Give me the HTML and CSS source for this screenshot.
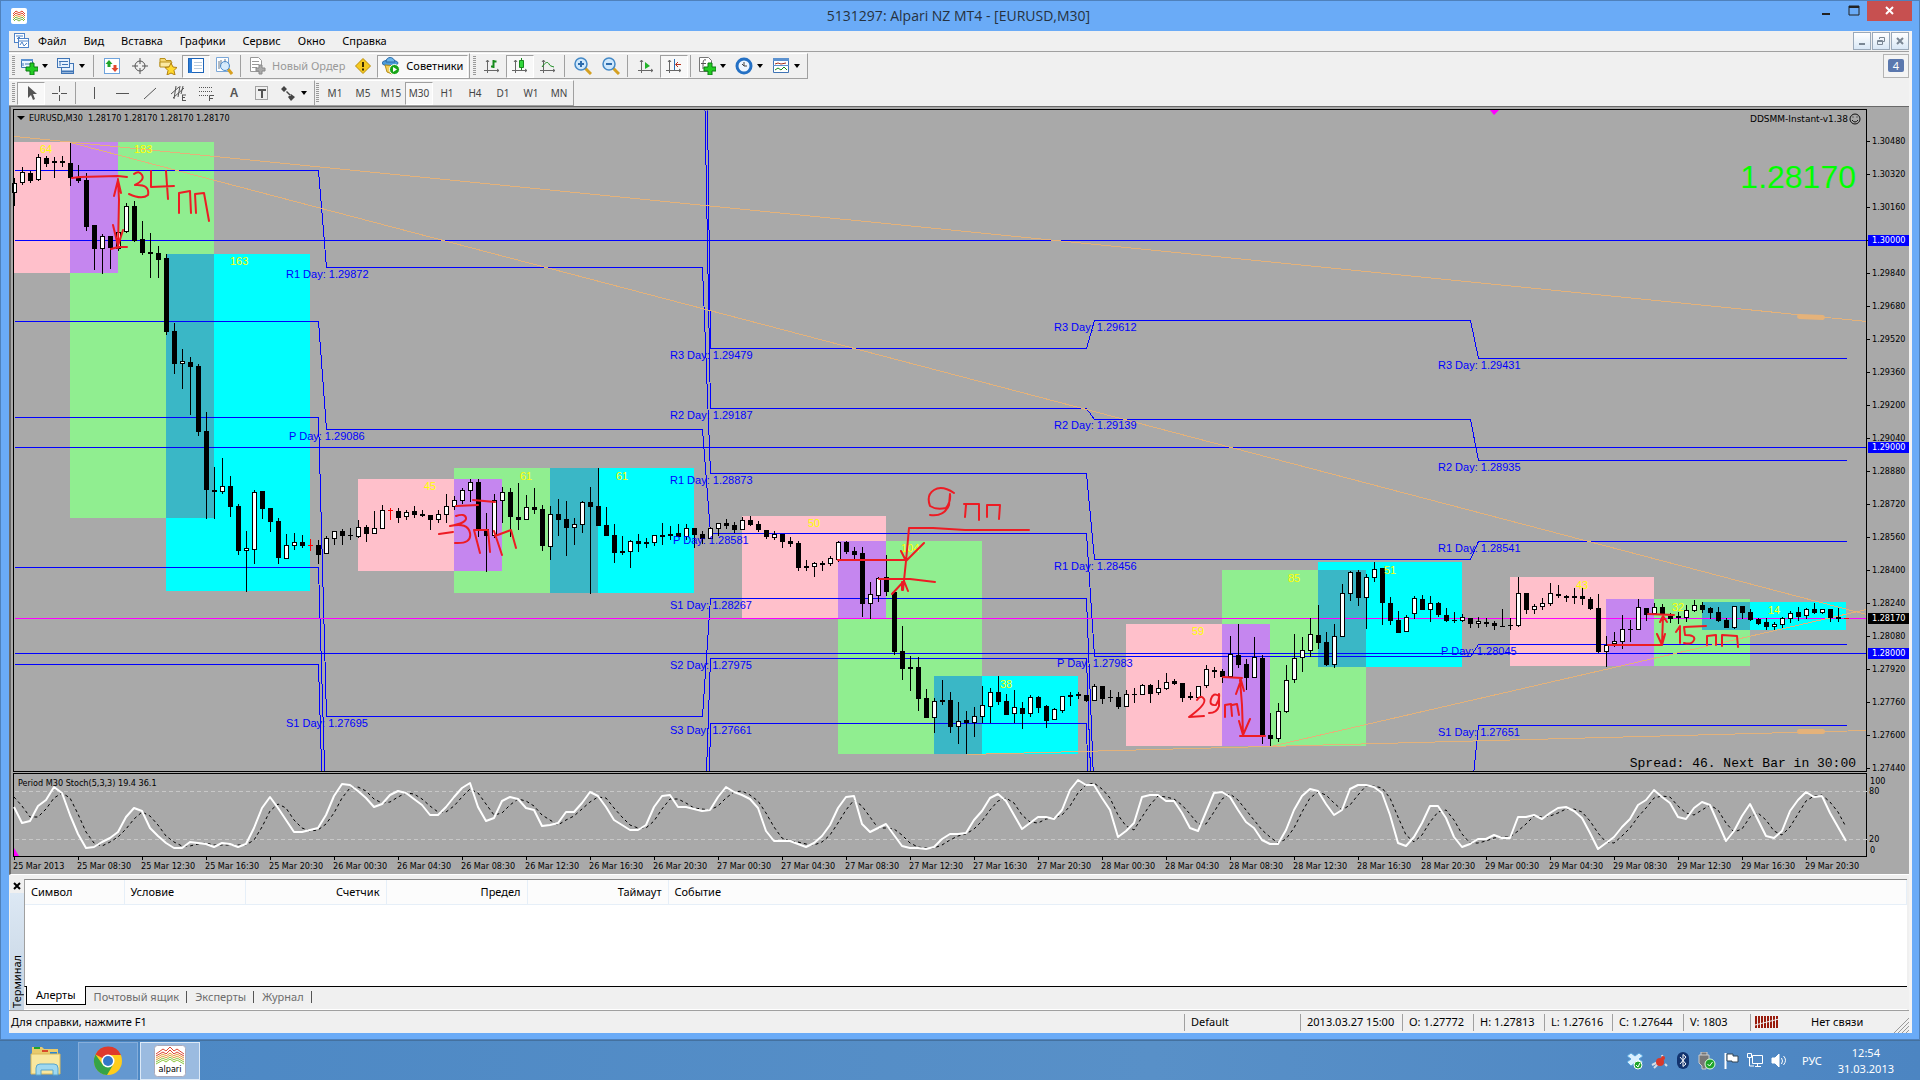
FILE: index.html
```html
<!DOCTYPE html>
<html lang="ru">
<head>
<meta charset="utf-8">
<title>5131297: Alpari NZ MT4 - [EURUSD,M30]</title>
<link rel="stylesheet" href="styles.css">
</head>
<body>
<div class="window">
  <header class="titlebar">
    <svg class="app-icon" width="16" height="16" viewBox="0 0 16 16"><rect width="16" height="16" rx="2" fill="#fff"/><g fill="none" stroke-width="1"><path stroke="#e0452c" d="M2 6l3-3 3 2 3-2 3 3M2 8l3-3 3 2 3-2 3 3"/><path stroke="#e9a13b" d="M2 10l3-3 3 2 3-2 3 3"/><path stroke="#7cb342" d="M2 12l3-3 3 2 3-2 3 3M3 13l2-2 3 2 3-2 2 2"/></g></svg>
    <h1 class="title">5131297: Alpari NZ MT4 - [EURUSD,M30]</h1>
    <div class="caption">
      <button class="cap" aria-label="Свернуть"><svg width="12" height="12"><rect x="1" y="8" width="8" height="2" fill="#222"/></svg></button>
      <button class="cap" aria-label="Развернуть"><svg width="12" height="12"><path d="M1 1h10v9H1z" fill="none" stroke="#222"/><path d="M1 1h10v2H1z" fill="#222"/></svg></button>
      <button class="cap close" aria-label="Закрыть"><svg width="10" height="10"><path d="M1 1l7 7M8 1L1 8" stroke="#fff" stroke-width="2"/></svg></button>
    </div>
  </header>

  <div class="client">
    <nav class="menubar">
      <svg class="menu-icon" width="15" height="16" viewBox="0 0 15 16"><g fill="#fff" stroke="#4f83c8"><rect x=".5" y=".5" width="10" height="9"/><path d="M2 3h7M3 6l2-2 2 2"/><rect x="4.500" y="5.500" width="10" height="9"/><path fill="none" d="M5 8h9M6 12l2-3 2 4 3-3"/></g></svg>
      <button class="menu">Файл</button><button class="menu">Вид</button><button class="menu">Вставка</button><button class="menu">Графики</button><button class="menu">Сервис</button><button class="menu">Окно</button><button class="menu">Справка</button>
      <div class="mdi">
        <button aria-label="Свернуть окно"><svg width="10" height="10"><path d="M2 7h6v2H2z" fill="#7a8794"/></svg></button>
        <button aria-label="Восстановить окно"><svg width="10" height="10"><path d="M3.500 3V1.500h5v4H7M1.500 4.500h5v4h-5zM1 5.500h6" fill="none" stroke="#7a8794"/></svg></button>
        <button aria-label="Закрыть окно"><svg width="10" height="10"><path d="M2 2l6 6M8 2L2 8" stroke="#7a8794" stroke-width="2"/></svg></button>
      </div>
    </nav>

    <div class="toolrow">
      <div class="toolbar">
        <i class="grip"></i>
        <button class="tool drop" aria-label="Новый график"><svg width="18" height="18"><path d="M1.500 2.500h11v8h-11z" fill="#eaf4ff" stroke="#3f74b5"/><path d="M1 2h12v2H1z" fill="#5c92d0"/><path d="M3 6v3M5 7h5" stroke="#3f74b5"/><path d="M10 6h4v4h4v4h-4v4h-4v-4H6v-4h4z" fill="#22cc22" stroke="#0b7a12"/></svg></button>
        <button class="tool drop" aria-label="Профили"><svg width="18" height="18"><g fill="#e6f1fd" stroke="#3f74b5"><rect x="4.500" y="6.500" width="12" height="10"/><path d="M5 14.500h12" stroke-width="2"/><rect x=".5" y="1.500" width="12" height="9"/><path d="M3 4v5M2 4.500h9M5 7.500h6"/></g></svg></button>
        <i class="sep"></i>
        <button class="tool" aria-label="Обзор рынка"><svg width="16" height="16"><rect x=".5" y=".5" width="15" height="15" fill="#fff" stroke="#6fa3dc"/><path d="M5 2l3.500 4H6.500v3H3.500V6H1.500z" fill="#1fa52a"/><path d="M11 14l-3.500-4h2V7h3v3h2z" fill="#e2472c"/></svg></button>
        <button class="tool" aria-label="Окно данных"><svg width="16" height="16" fill="none" stroke="#555"><circle cx="8" cy="8" r="5"/><path d="M8 0v6M8 10v6M0 8h6M10 8h6"/></svg></button>
        <button class="tool" aria-label="Навигатор"><svg width="18" height="18"><path d="M1 1.500h5l1 2h5v6H1z" fill="#f6d873" stroke="#b8901d"/><path d="M1 5h12l-2 5H1z" fill="#fbe9a2" stroke="#b8901d"/><path d="M12 6l2 4 4 .5-3 3 1 4.500-4-2-4 2 1-4.500-3-3 4-.5z" fill="#ffd92e" stroke="#b07f10"/></svg></button>
        <button class="tool on" aria-label="Терминал"><svg width="16" height="16"><rect x=".5" y=".5" width="15" height="14" fill="#fff" stroke="#1c63b7"/><path d="M1 1h3v14H1z" fill="#2d7dd6"/><path d="M6 4.500h8M6 7.500h8M6 10.500h8" stroke="#bcd"/></svg></button>
        <button class="tool" aria-label="Тестер стратегий"><svg width="18" height="18"><path d="M1.500.5h12v14h-12z" fill="#fff" stroke="#7aa7d8"/><path d="M4 4v8M6 3v6M10 2v5" stroke="#678"/><path d="M13 12l4 5" stroke="#d8a020" stroke-width="3"/><circle cx="10" cy="9" r="4.500" fill="#cfe7fb" fill-opacity=".85" stroke="#4b8ac9"/></svg></button>
        <i class="sep"></i>
        <button class="tool label off" disabled><svg width="17" height="18"><path d="M1.500.5h8l3 3v11h-11z" fill="#fff" stroke="#999"/><path d="M3 4.500h7M3 7.500h7M3 10.500h5" stroke="#999"/><path d="M10 8h3v3h3v3h-3v3h-3v-3H7v-3h3z" fill="#aaa" stroke="#888"/></svg><span>Новый Ордер</span></button>
        <button class="tool" aria-label="MetaEditor"><svg width="16" height="16"><path d="M8 .5L15.500 8 8 15.500.5 8z" fill="#f6c91f" stroke="#b98c07"/><path d="M8 4v5M8 10.500v2" stroke="#3b2c00" stroke-width="2"/></svg></button>
        <button class="tool label on"><svg width="18" height="18"><ellipse cx="8" cy="6" rx="8" ry="3" fill="#4b9bd8" stroke="#2a6aa8"/><path d="M4 5c0-6 8-6 9 0z" fill="#6bb5ea" stroke="#2a6aa8"/><path d="M3 8l2 7 5 2 4-8z" fill="#f3cf58" stroke="#b48d1c"/><circle cx="12.500" cy="12.500" r="5" fill="#16a516" stroke="#fff"/><path d="M11 10l4 2.500-4 2.500z" fill="#fff"/></svg><span>Советники</span></button>
      </div>
      <div class="toolbar">
        <i class="grip"></i>
        <button class="tool" aria-label="Бары"><svg width="16" height="16" fill="none" stroke="#666"><path d="M3.500 2v13M0 12.500h15M2 4l1.500-2L5 4M13 11l2 1.500-2 1.500"/><path d="M9.500 2v8M7 8.500h2M10 3.500h2.500" stroke="#168a1c" stroke-width="2"/></svg></button>
        <button class="tool on" aria-label="Японские свечи"><svg width="16" height="16" fill="none" stroke="#666"><path d="M3.500 2v13M0 12.500h15M2 4l1.500-2L5 4M13 11l2 1.500-2 1.500"/><path d="M9.500 0v12" stroke="#168a1c"/><path d="M7.500 2.500h4v7h-4z" fill="#30d63a" stroke="#168a1c"/></svg></button>
        <button class="tool" aria-label="Линия"><svg width="16" height="16" fill="none" stroke="#666"><path d="M3.500 2v13M0 12.500h15M2 4l1.500-2L5 4M13 11l2 1.500-2 1.500"/><path d="M2 9c4-6 6-5 7-3s2 2 5 3" stroke="#168a1c"/></svg></button>
        <i class="sep"></i>
        <button class="tool" aria-label="Увеличить"><svg width="18" height="18"><path d="M11 11l6 6" stroke="#d5a021" stroke-width="3"/><circle cx="7" cy="7" r="6" fill="#cfe8fc" stroke="#4489c7" stroke-width="1.500"/><path d="M7 4v6M4 7h6" stroke="#2d6cad" stroke-width="2"/></svg></button>
        <button class="tool" aria-label="Уменьшить"><svg width="18" height="18"><path d="M11 11l6 6" stroke="#d5a021" stroke-width="3"/><circle cx="7" cy="7" r="6" fill="#cfe8fc" stroke="#4489c7" stroke-width="1.500"/><path d="M4 7h6" stroke="#2d6cad" stroke-width="2"/></svg></button>
        <i class="sep"></i>
        <button class="tool" aria-label="Автопрокрутка"><svg width="16" height="16" fill="none" stroke="#666"><path d="M3.500 2v13M0 12.500h15M2 4l1.500-2L5 4M13 11l2 1.500-2 1.500"/><path d="M7 4l5 4-5 3z" fill="#22b32a" stroke="none"/></svg></button>
        <button class="tool on" aria-label="Сдвиг графика"><svg width="16" height="16" fill="none" stroke="#666"><path d="M3.500 2v13M0 12.500h15M2 4l1.500-2L5 4M13 11l2 1.500-2 1.500"/><path d="M8.500 1v11" stroke="#2a6fb8"/><path d="M10 6.500h5M12 4L9.500 6.500 12 9" stroke="#b5301c"/></svg></button>
        <i class="sep"></i>
        <button class="tool drop" aria-label="Индикаторы"><svg width="18" height="18"><path d="M1.500.5h9l3 3v11h-12z" fill="#fff" stroke="#777"/><path d="M8 3c-3-1-3 1-3 9M3 6.500h5" fill="none" stroke="#555"/><path d="M10 6h4v4h4v4h-4v4h-4v-4H6v-4h4z" fill="#22cc22" stroke="#0b7a12"/></svg></button>
        <button class="tool drop" aria-label="Периоды"><svg width="18" height="18"><circle cx="9" cy="9" r="7" fill="#eef6ff" stroke="#2470c4" stroke-width="3"/><path d="M9 5v4h3M9 9L7 7" stroke="#444" fill="none"/></svg></button>
        <button class="tool drop" aria-label="Шаблоны"><svg width="18" height="18"><path d="M1.500 1.500h15v14h-15z" fill="#fff" stroke="#3f74b5"/><path d="M1 1h16v3H1zM1 8h16v1H1z" fill="#5c92d0"/><path d="M3 7l3-1 3 1 5-1" stroke="#a5301c" fill="none"/><path d="M3 13l3-2 3 2 3-3 3 3" stroke="#168a1c" fill="none"/></svg></button>
      </div>
      <button class="messages" aria-label="Сообщения"><span>4</span></button>
    </div>

    <div class="toolrow">
      <div class="toolbar">
        <i class="grip"></i>
        <button class="tool on" aria-label="Курсор"><svg width="16" height="16"><path d="M5 1v12l3-3 2 5 2-1-2-5h4z" fill="#555"/></svg></button>
        <button class="tool" aria-label="Перекрестие"><svg width="16" height="16"><path d="M8.500 1v6M8.500 10v6M1 8.500h6M10 8.500h6" stroke="#555"/></svg></button>
        <i class="sep"></i>
        <button class="tool" aria-label="Вертикальная линия"><svg width="16" height="16"><path d="M8.500 2v12" stroke="#555"/></svg></button>
        <button class="tool" aria-label="Горизонтальная линия"><svg width="16" height="16"><path d="M2 8.500h13" stroke="#555"/></svg></button>
        <button class="tool" aria-label="Трендовая линия"><svg width="16" height="16"><path d="M2 14L14 3" stroke="#555"/></svg></button>
        <button class="tool" aria-label="Канал"><svg width="16" height="16" fill="none" stroke="#555"><path d="M1 9L9 2M3 13L14 3M6 1L4 14M10 1L8 12M13 1l-2 8M12 10h4M12 12.500h3M12 15.500h4M12.500 10v6"/></svg></button>
        <button class="tool" aria-label="Фибоначчи"><svg width="16" height="16" fill="none" stroke="#555"><path stroke-dasharray="1 1" d="M1 2.500h13M1 6.500h13M1 10.500h9"/><path d="M11.500 16v-5.500H16M11 13.500h4"/></svg></button>
        <button class="tool glyph" aria-label="Текст">A</button>
        <button class="tool" aria-label="Метка"><svg width="16" height="16" fill="none" stroke="#555"><path stroke-dasharray="1 1" d="M1.500 1.500h12v13h-12z"/><path stroke-width="2" d="M4 5h8M8 5v8"/></svg></button>
        <button class="tool drop" aria-label="Стрелки"><svg width="18" height="18" fill="#444"><path d="M5 2l3 3-3 3-3-3zM12 10l4 3-4 4-3-4zM7 8l4 4 1-1-4-4z"/></svg></button>
      </div>
      <div class="toolbar frames">
        <i class="grip"></i>
        <button class="frame">M1</button><button class="frame">M5</button><button class="frame">M15</button><button class="frame on">M30</button><button class="frame">H1</button><button class="frame">H4</button><button class="frame">D1</button><button class="frame">W1</button><button class="frame">MN</button>
      </div>
    </div>

    <main class="chart">
      <svg id="chart" viewBox="11 107 1898 767" role="img" aria-label="EURUSD,M30">
        <defs><clipPath id="plot"><rect x="14" y="110" width="1852" height="661"/></clipPath></defs>
        <g id="zones"></g>
        <g id="pivots" class="line blue" clip-path="url(#plot)"></g>
        <g class="line blue"><path d="M14 240H1866M14 447H1866M14 653H1866"/></g>
        <g class="line magenta"><path d="M14 618H1866"/></g>
        <g class="line trend">
          <path d="M14 136L1866 321M70 142L1866 614M967 754L1866 730M1270 746L1866 609"/>
          <path class="thick" d="M1799 316L1822 317M1799 731H1822"/>
        </g>
        <g id="candles"></g>
        <g id="notes"></g>
        <g class="line border">
          <path d="M13 109H1866V771H13ZM13 773H1866V856H13Z"/>
          <path id="ticks"/>
        </g>
        <g class="line level"><path d="M14 791H1866M14 839H1866"/></g>
        <g id="stoch"></g>
        <path d="M1490 110h9l-5 5zM14 848l5 8h-5z" fill="#f0f"/>
        <path d="M17 116h8l-4 4z"/>
        <g class="axis">
          <text x="29" y="121" xml:space="preserve">EURUSD,M30  1.28170 1.28170 1.28170 1.28170</text>
          <text x="18" y="786">Period M30 Stoch(5,3,3) 19.4 36.1</text>
          <text x="1848" y="122" text-anchor="end" class="expert">DDSMM-Instant-v1.38</text>
          <text x="1870" y="784">100</text><text x="1869" y="794">80</text><text x="1869" y="842">20</text><text x="1870" y="853">0</text>
        </g>
        <g fill="none" stroke="#111"><circle cx="1855" cy="119" r="5"/><path d="M1852 120q3 4 6 0M1853 116.500v1M1857 116.500v1"/></g>
        <text x="1856" y="188" text-anchor="end" class="price">1.28170</text>
        <text x="1856" y="767" text-anchor="end" class="spread">Spread: 46. Next Bar in 30:00</text>
        <g id="labels" class="axis"></g>
        <path class="pen" d="M72 178l8-1 38-1 9 1M118 179l1 21-1 48M114 196l4-16 3 13M113 225l5 21 5-16M111 249l7-2h9M134 174q5-4 8 1t-7 10q15-1 13 10q-6 5-19-1M151 171v16l23-1M166 171l2 28M179 213v-20l11-2 1 22M196 213l-1-19 9-1 5 28
          M456 506l22-1M473 500l22 2M439 534l14-2M456 516q9-3 10 2t-16 8q18-4 20 7t-15 10M480 553l-6-23h14l2 22M494 531l8 24M495 536l16-6 5 18
          M954 493q-12-8-20-3t-4 16q6 4 16 2q5-6 4-14l-1 11q-5 12-19 10M964 504h15v16M966 505l-1 12M987 517v-12h13l-1 14M1029 530h-64l-32-2h-24l-3 33-3 29M901 551l5 10 18-18M838 560h68M879 579h31l25 3M892 594l12-13 4 10M902 590v-8
          M1223 677l19 1M1240 680l2 25 1 30M1236 694l5-14 3 11M1239 721l4 14 7-16M1240 736h25M1197 700q4-6 7-1t-15 18l15-1M1219 696q-6-4-8 3t5 6q4-6 3-11v12q-2 7-10 7M1225 717v-12l6-1 1 12M1232 705l5-1 2 11
          M1648 614l26 1M1663 616l-1 29M1660 622l3-6 4 6M1657 634l5 11 3-11M1608 645h54M1676 632l4-6v17M1706 626l-22 1 1 8q11 0 9 5t-10 3M1707 645v-9l9-1v10M1722 646v-11l15 1 1 11"/>
      </svg>
    </main>

    <section class="terminal">
      <div class="side">
        <button class="side-close" aria-label="Закрыть терминал"><svg width="8" height="8"><path d="M1 1l6 6M7 1L1 7" stroke="#000" stroke-width="2"/></svg></button>
        <span class="side-title">Терминал</span>
      </div>
      <div class="panel">
        <div class="sheet">
          <table class="alerts">
            <thead><tr><th class="c1">Символ</th><th class="c2">Условие</th><th class="c3 num">Счетчик</th><th class="c3 num">Предел</th><th class="c3 num">Таймаут</th><th>Событие</th></tr></thead>
          </table>
        </div>
        <div class="tabs">
          <button class="tab active">Алерты</button><button class="tab">Почтовый ящик</button><button class="tab">Эксперты</button><button class="tab">Журнал</button>
        </div>
      </div>
    </section>

    <footer class="status">
      <span class="help">Для справки, нажмите F1</span>
      <span class="cell w116">Default</span><span class="cell w102">2013.03.27 15:00</span><span class="cell w71">O: 1.27772</span><span class="cell w71">H: 1.27813</span><span class="cell w68">L: 1.27616</span><span class="cell w71">C: 1.27644</span><span class="cell w67">V: 1803</span>
      <span class="cell link"><svg width="24" height="12"><path d="M1 0v12M4 0v12M7 0v12M10 0v12M13 0v12M16 0v12M19 0v12M22 0v12" stroke="#981b0c" stroke-width="2"/><path d="M0 9L24 3" stroke="#f0f0f0"/></svg><span>Нет связи</span></span>
      <svg class="sizer" width="16" height="16" stroke="#999"><path d="M1 16L16 1M5 16L16 5M9 16l7-7M13 16l3-3"/></svg>
    </footer>
  </div>
</div>

<div class="taskbar">
  <button class="task plain" aria-label="Проводник"><svg width="32" height="30" viewBox="0 0 32 30"><path d="M2 1h10l2 2h14v25H2z" fill="#e8ca6c"/><path d="M4 1h6v2H4z" fill="#1fa52a"/><path d="M12 4h6v2h-6z" fill="#d94a2b"/><path d="M20 6h7v2h-7z" fill="#2a86d0"/><path d="M1 8h29v20H1z" fill="#f8e7a0" stroke="#d9b95a"/><path d="M6 29v-7q0-4 4-4h14q4 0 4 4v7h-5v-5H11v5z" fill="#9fd8f0" stroke="#58a5cc"/></svg></button>
  <button class="task" aria-label="Chrome"><svg width="30" height="30" viewBox="0 0 30 30"><circle cx="15" cy="15" r="14" fill="#ffcd1c"/><path d="M15 15L2.500 8.500A14 14 0 0 1 28 9H15z" fill="#de3a2c"/><path d="M2.500 8.500A14 14 0 0 0 14 29l6-10-10 0z" fill="#35a347"/><circle cx="15" cy="15" r="6.500" fill="#fff"/><circle cx="15" cy="15" r="5" fill="#3377c8"/></svg></button>
  <button class="task current" aria-label="Alpari"><svg width="32" height="32" viewBox="0 0 32 32"><rect x=".5" y=".5" width="31" height="31" rx="3" fill="#fff" stroke="#aab"/><g fill="none"><path stroke="#dc4632" d="M2 9l7-5 3 2 4-4 4 4 3-2 7 5M2 11l7-4 3 2 4-4 4 4 3-2 7 4"/><path stroke="#e79a3a" d="M2 13l7-4 3 2 4-3 4 3 3-2 7 4M2 15l7-4 3 2 4-3 4 3 3-2 7 4"/><path stroke="#8cc63f" d="M2 17l7-4 3 2 4-3 4 3 3-2 7 4M2 19l7-4 3 2 4-3 4 3 3-2 7 4"/></g><text x="16" y="27" text-anchor="middle" class="brand">alpari</text></svg></button>
  <div class="tray">
    <svg width="18" height="18"><path d="M5 1l4 3 4-3 4 3-4 3 4 3-4 4-4-3-4 3-4-4 4-3-4-3z" fill="#d9efff" stroke="#57a4dc"/><circle cx="12" cy="13" r="4" fill="#1fa52a" stroke="#fff"/><path d="M10 13l2 2 2-4" stroke="#fff" fill="none"/></svg>
    <svg width="18" height="18"><path d="M2 13l6-3M4 16l4-4M12 3l1 4M15 12l2 2" stroke="#d7dde4" stroke-width="2"/><circle cx="10" cy="10" r="4" fill="#d9382a"/><circle cx="13" cy="6" r="2" fill="#d9382a"/></svg>
    <svg width="18" height="18"><rect x="3" width="12" height="17" rx="6" fill="#12336e"/><path d="M6 5l6 7-3 2.500V2.500L12 5l-6 7" fill="none" stroke="#fff"/></svg>
    <svg width="18" height="18"><path d="M3 3V0h6v3M1 3h10v8l-3 3v3H4v-3l-3-3z" fill="#777" stroke="#ccc"/><circle cx="12" cy="12" r="5" fill="#1fa52a" stroke="#dfd"/><path d="M9.500 12l2 2 3-4" stroke="#fff" fill="none"/></svg>
    <svg width="18" height="18"><path d="M3.500 1v16" stroke="#fff" stroke-width="2"/><path d="M5 2h6v2h5v6h-6V9H5z" fill="#fff" stroke="#345"/></svg>
    <svg width="18" height="18" fill="none" stroke="#fff"><path d="M6.500 3.500h10v8h-10zM9 14.500h6M11.500 12v3M1.500 1.500h4v4h-4zM3.500 6v8H8"/></svg>
    <svg width="18" height="18" fill="none" stroke="#fff"><path d="M2 6h3l4-4v13l-4-4H2z" fill="#fff"/><path d="M11.500 6q2 3 0 6M13.500 4q4 4 0 9"/></svg>
    <span class="lang">РУС</span>
    <div class="clock"><time>12:54</time><time>31.03.2013</time></div>
  </div>
</div>
<script src="chart.js"></script>
</body>
</html>
```
FILE: styles.css
```css
* { box-sizing: border-box; }
body {
  margin: 0;
  min-height: 100vh;
  display: flex;
  flex-direction: column;
  background: #4c87c4;
  font: 11px/16px "Noto Sans", "Open Sans", sans-serif;
  color: #000;
}
button {
  margin: 0;
  padding: 0;
  border: 0;
  background: none;
  font: inherit;
  color: inherit;
}
svg { display: block; flex: none; }

.window {
  flex: 1;
  display: flex;
  flex-direction: column;
  background: #6aabf7;
  border: 1px solid #4f81bb;
  padding: 0 7px 6px 8px;
}
.titlebar {
  position: relative;
  height: 30px;
  display: flex;
  align-items: center;
  padding: 0 22px 0 2px;
}
.title {
  flex: 1;
  margin: 0;
  text-align: center;
  font: 14px/20px "Open Sans", sans-serif;
  color: #26323f;
}
.caption {
  position: absolute;
  top: 0;
  right: 0;
  display: flex;
}
.cap {
  width: 27px;
  height: 20px;
  display: flex;
  align-items: center;
  justify-content: center;
}
.cap.close { width: 45px; background: #c75050; }

.client {
  flex: 1;
  display: flex;
  flex-direction: column;
  background: #f0f0f0;
  border-right: 3px solid #f4f4f4;
}
.menubar {
  height: 21px;
  display: flex;
  align-items: center;
  padding-left: 5px;
  border-bottom: 1px solid #a0a0a0;
}
.menu-icon { margin-right: 9px; }
.menu { margin-right: 17px; white-space: nowrap; }
.mdi { margin-left: auto; display: flex; gap: 1px; }
.mdi button {
  width: 18px;
  height: 18px;
  display: flex;
  align-items: center;
  justify-content: center;
  border: 1px solid #9aa9b9;
  background: linear-gradient(#fff, #d9e8f6);
}

.toolrow {
  height: 27px;
  display: flex;
  align-items: flex-end;
}
.toolbar {
  height: 26px;
  display: flex;
  align-items: center;
  padding: 0 1px 0 3px;
  border-top: 1px solid #fff;
  border-right: 1px solid #a0a0a0;
  border-bottom: 1px solid #a0a0a0;
}
.grip {
  width: 3px;
  height: 20px;
  margin-right: 2px;
  background: repeating-linear-gradient(#999 0 1px, #f0f0f0 1px 2px);
}
.sep {
  width: 1px;
  height: 22px;
  margin: 0 4px 0 2px;
  background: #a0a0a0;
}
.tool {
  position: relative;
  width: 28px;
  height: 23px;
  display: flex;
  align-items: center;
  justify-content: center;
}
.tool.on, .frame.on {
  background: #f8f8f8;
  border: 1px solid #fff;
  border-top-color: #a0a0a0;
  border-left-color: #a0a0a0;
}
.drop { width: 37px; justify-content: flex-start; padding-left: 3px; }
.drop::after {
  content: "";
  margin-left: 4px;
  border: 3px solid transparent;
  border-top: 4px solid #000;
  border-bottom: 0;
}
.label { width: auto; padding: 0 4px; gap: 6px; white-space: nowrap; }
.off { color: #999; }
.glyph { font: bold 12px/16px "Liberation Sans", sans-serif; color: #555; }
.frame { width: 28px; height: 23px; font-size: 10px; color: #444; }
.frames { padding-left: 1px; padding-right: 0; }
.messages {
  width: 26px;
  height: 24px;
  margin: 0 0 1px auto;
  padding: 0 4px 2px;
  border: 1px solid #b4b4b4;
  background: #f4f4f4;
}
.messages span {
  display: block;
  height: 13px;
  border-radius: 2px;
  background: #5b78ae;
  color: #fff;
  line-height: 13px;
}

.chart {
  border: solid #696969;
  border-width: 1px 0 0 2px;
  border-bottom: 1px solid #fff;
  background: #a9a9a9;
}
#chart { width: 100%; height: auto; }
.line { fill: none; shape-rendering: crispEdges; transform: translate(.5px, .5px); }
.blue { stroke: #00f; }
.magenta { stroke: #f0f; }
.border { stroke: #000; }
.trend { stroke: #e4b27a; }
.thick { stroke-width: 5; stroke-linecap: round; shape-rendering: auto; }
.level { stroke: #c8c8c8; stroke-dasharray: 4 3; }
.pen { fill: none; stroke: #ed1c24; stroke-width: 2; stroke-linecap: round; stroke-linejoin: round; }
.main { fill: none; stroke: #fff; stroke-width: 2; stroke-linejoin: round; }
.signal { fill: none; stroke: #000; stroke-dasharray: 3 3; }
.axis { font: 9px "DejaVu Sans Condensed", "DejaVu Sans", sans-serif; }
.expert { font-family: "DejaVu Sans", sans-serif; }
.day, .range { font: 11px "Liberation Sans", Arial, sans-serif; fill: #00f; }
.range { fill: #ff0; }
.price { font: 32px "Liberation Sans", Arial, sans-serif; fill: #0f0; }
.spread { font: 13px "Liberation Mono", "Courier New", monospace; }
.tag { fill: #fff; }

.terminal { flex: 1; display: flex; padding-top: 4px; }
.side {
  width: 15px;
  display: flex;
  flex-direction: column;
  align-items: center;
}
.side-close { height: 14px; }
.side-title {
  flex: 1;
  width: 14px;
  writing-mode: vertical-rl;
  transform: rotate(180deg);
  line-height: 14px;
  padding-top: 2px;
  background: linear-gradient(#c5d3e2, #dce8f4);
}
.panel { flex: 1; display: flex; flex-direction: column; padding-right: 2px; }
.sheet {
  flex: 1;
  background: #fff;
  border-top: 1px solid #8c8c8c;
  border-left: 1px solid #a0a0a0;
  border-bottom: 1px solid #000;
}
.alerts { width: 100%; table-layout: fixed; border-collapse: collapse; }
.alerts th {
  height: 24px;
  padding: 0 6px;
  font-weight: normal;
  text-align: left;
  background: #fcfcfc;
  border-right: 1px solid #e6eff8;
  border-bottom: 1px solid #e6eff8;
}
.alerts .num { text-align: right; }
.c1 { width: 99px; }
.c2 { width: 121px; }
.c3 { width: 141px; }
.tabs {
  height: 23px;
  display: flex;
  align-items: flex-start;
  padding-left: 2px;
  border-bottom: 1px solid #fff;
}
.tab { position: relative; height: 19px; padding: 0 8px; color: #6d6d6d; white-space: nowrap; }
.tab:not(.active)::after {
  content: "";
  position: absolute;
  right: 0;
  top: 4px;
  height: 12px;
  border-right: 1px solid #555;
}
.tab.active {
  margin-top: -1px;
  padding: 0 9px;
  background: #fff;
  color: #000;
  border: 1px solid #000;
  border-top: 0;
}
.status {
  height: 23px;
  display: flex;
  align-items: center;
  padding-left: 2px;
  border-top: 1px solid #a0a0a0;
  white-space: nowrap;
}
.help { flex: 1; }
.cell { height: 17px; padding-left: 6px; border-left: 1px solid #a0a0a0; }
.w116 { width: 116px; }
.w102 { width: 102px; }
.w71 { width: 71px; }
.w68 { width: 68px; }
.w67 { width: 67px; }
.link { width: 143px; display: flex; align-items: center; gap: 32px; padding-left: 4px; }
.sizer { align-self: flex-end; }

.taskbar {
  height: 40px;
  display: flex;
  align-items: center;
  gap: 2px;
  padding-left: 16px;
  background: linear-gradient(90deg, #4b87c4, #5890c8 60%, #4c85c2);
  border-top: 1px solid #44719f;
  color: #fff;
}
.task {
  width: 60px;
  height: 38px;
  display: flex;
  align-items: center;
  justify-content: center;
  border: 1px solid #86aedb;
  background: #6498d0;
}
.task.plain { background: none; border-color: transparent; }
.task.current { background: #9bbbe0; border-color: #dce9f7; }
.brand { font: 9px "DejaVu Sans Condensed", sans-serif; }
.tray { margin-left: auto; display: flex; align-items: center; gap: 6px; padding-right: 26px; }
.lang { margin: 0 10px 0 8px; }
.clock { display: flex; flex-direction: column; text-align: center; }
```
FILE: chart.js
```js
const svg = (id) => document.getElementById(id);
const bar = (i) => 14 + 8 * i;

// Session ranges: left, top, right, bottom, colour.
const PINK = '#ffc0cb', GREEN = '#90ee90', VIOLET = '#c586ef', CYAN = '#00ffff', TEAL = '#3ab7c6';
const zones = [
  [14, 142, 70, 273, PINK], [70, 142, 214, 518, GREEN], [70, 142, 118, 273, VIOLET], [166, 254, 310, 591, CYAN], [166, 254, 214, 518, TEAL],
  [358, 479, 502, 571, PINK], [454, 468, 598, 593, GREEN], [454, 479, 502, 571, VIOLET], [550, 468, 694, 593, CYAN], [550, 468, 598, 593, TEAL],
  [742, 516, 886, 618, PINK], [838, 541, 982, 754, GREEN], [838, 541, 886, 618, VIOLET], [934, 676, 1078, 754, CYAN], [934, 676, 982, 754, TEAL],
  [1126, 624, 1270, 746, PINK], [1222, 570, 1366, 746, GREEN], [1222, 624, 1270, 746, VIOLET], [1318, 562, 1462, 667, CYAN], [1318, 570, 1366, 667, TEAL],
  [1510, 577, 1654, 666, PINK], [1606, 599, 1750, 666, GREEN], [1606, 599, 1654, 666, VIOLET], [1702, 602, 1846, 630, CYAN], [1702, 602, 1750, 630, TEAL]
];
svg('zones').innerHTML = zones.map(([l, t, r, b, c]) =>
  `<rect x="${l}" y="${t}" width="${r - l}" height="${b - t}" fill="${c}"/>`).join('');

// Daily pivot levels, one path per level.
const pivots = [
  'M14 170H318L326 267H702L710 473H1086L1094 559H1470L1478 541H1846',
  'M14 321H318L326 429H702L710 533H1086L1094 656H1470L1478 644H1846',
  'M14 417H318L326 716H702L710 598H1086L1094 805M1470 805L1478 725H1846',
  'M14 567H318L326 831M702 884L710 658H1086L1094 884',
  'M14 664H318L326 931M702 1110L710 723H1086L1094 1050',
  'M702 -291L710 348H1086L1094 320H1470L1478 358H1846',
  'M702 -26L710 408H1086L1094 419H1470L1478 460H1846'
];
svg('pivots').innerHTML = pivots.map((d) => `<path d="${d}"/>`).join('');

// Candles: high, body top, body bottom, low, kind (w up, b down, r flat).
const candles = `178 183 193 206 w,167 172 183 185 w,171 173 181 183 b,154 157 180 181 w,156 158 164 167 b,157 161 163 178 b,156 161 163 167 b,143 163 178 186 b,165 178 181 183 b,173 180 227 231 b,
225 225 249 270 b,234 236 249 274 w,236 236 248 269 b,231 232 249 251 w,203 206 232 233 w,201 206 241 242 b,221 239 253 255 b,233 252 254 278 b,246 253 260 278 b,254 258 332 335 b,
323 331 364 374 b,349 361 364 389 w,357 362 367 415 b,364 366 432 436 b,412 431 490 519 b,467 490 492 519 b,458 486 492 494 w,476 486 507 517 b,504 506 551 555 b,531 548 551 592 w,
490 492 550 564 w,491 491 509 519 b,508 508 522 532 b,518 521 558 564 b,534 545 559 559 w,533 542 546 550 w,535 542 546 548 b,539 545 546 551 r,540 545 555 564 b,536 538 554 554 w,
531 531 539 545 w,529 531 536 545 b,528 535 536 540 b,520 527 537 538 w,525 527 534 542 b,511 528 534 534 w,505 510 529 529 w,508 510 511 520 r,508 511 518 523 b,510 512 517 520 w,
506 511 515 518 b,510 514 516 517 b,515 515 520 530 b,510 514 520 523 w,494 506 515 523 w,496 500 507 510 w,488 490 501 504 w,479 482 491 502 w,479 482 529 537 b,513 529 536 572 b,
494 500 536 538 w,487 492 501 523 w,488 492 517 537 b,483 517 520 530 b,495 507 520 520 w,488 507 510 514 b,505 509 546 551 b,506 514 547 560 w,499 514 520 536 b,501 519 528 556 b,
518 524 528 545 w,501 502 525 533 w,487 502 507 594 b,468 506 526 526 b,507 525 536 536 b,524 535 553 563 b,536 551 553 555 b,540 541 552 568 w,534 541 544 552 b,538 542 544 548 b,
535 535 543 546 w,523 535 537 545 b,526 534 536 540 b,524 533 537 537 b,524 528 537 540 w,528 528 535 548 b,531 534 539 544 b,527 528 539 539 w,523 523 529 536 w,519 523 526 529 b,
522 525 530 533 b,517 520 530 530 w,516 520 525 526 b,521 524 530 532 b,530 530 537 539 b,531 534 538 540 w,534 534 542 548 b,537 541 544 547 b,541 543 568 571 b,560 566 568 571 b,
562 563 567 577 w,561 563 565 571 b,556 558 564 566 w,541 542 560 562 w,541 542 552 554 b,547 551 555 559 b,547 553 604 617 b,582 594 604 619 w,577 578 596 602 w,555 577 592 596 b,
590 592 652 655 b,626 651 669 680 b,656 667 669 691 b,657 667 699 711 b,689 698 718 718 b,698 701 718 733 w,680 700 702 705 b,692 700 727 733 b,702 721 727 744 w,711 720 723 754 b,
707 716 723 737 w,686 705 717 723 w,688 692 707 723 w,676 692 702 705 b,694 701 715 715 b,690 707 714 723 w,702 708 714 729 b,695 697 714 717 w,696 697 708 713 b,705 706 721 728 b,
708 709 720 720 w,696 696 711 713 w,692 695 697 706 b,692 694 696 699 b,695 695 701 702 b,684 686 701 701 w,686 686 699 704 b,690 697 698 702 b,692 697 707 709 b,690 694 707 707 w,
688 694 695 703 b,684 685 695 695 w,684 685 694 703 b,680 688 693 695 w,673 682 689 690 w,679 681 684 685 b,683 683 698 702 b,692 696 698 700 b,686 686 698 698 w,665 669 686 688 w,
667 670 672 678 b,669 671 677 683 b,636 654 677 677 w,624 655 665 668 b,659 664 678 690 b,637 657 678 678 w,655 658 736 744 b,713 735 739 746 b,703 711 739 742 w,665 680 712 713 w,
634 658 680 683 w,637 650 658 672 w,618 634 651 657 w,605 635 643 649 b,632 642 665 666 b,624 636 665 668 w,584 593 637 637 w,571 572 594 601 w,570 572 598 606 b,574 577 598 629 w,
562 569 578 582 w,568 568 603 625 b,597 603 621 625 b,611 620 633 633 b,615 617 632 632 w,596 598 614 619 w,595 599 610 610 b,596 603 610 622 w,602 603 615 617 b,608 615 621 622 b,
612 620 621 623 b,614 617 621 622 w,618 618 624 628 b,617 621 624 628 w,618 622 624 627 b,621 623 626 630 b,609 626 627 627 b,618 625 626 630 b,577 593 626 627 w,593 593 610 614 b,
604 606 610 614 w,598 603 607 610 w,583 593 604 606 w,585 594 596 598 b,595 596 598 602 b,588 596 598 604 b,588 596 599 605 b,597 599 609 610 b,594 608 652 653 b,636 645 652 667 w,
632 641 644 647 w,615 629 642 649 w,620 629 630 642 b,599 607 630 630 w,608 608 615 621 b,603 607 614 614 w,604 607 614 614 b,613 616 619 623 b,612 616 618 624 b,605 610 618 622 w,
600 605 611 612 w,602 605 610 613 b,607 608 613 619 b,607 612 621 622 b,618 620 628 628 b,606 606 628 629 w,606 606 613 619 b,609 612 620 621 b,618 619 624 625 b,618 622 627 630 b,
622 624 627 630 w,617 618 625 628 w,611 613 619 623 w,607 612 617 621 b,608 609 616 619 w,603 609 613 614 b,609 609 613 614 w,609 609 618 622 b,608 617 619 622 b,618 618 619 619 r`;
svg('candles').innerHTML = candles.split(',').map((row, i) => {
  const [h, t, b, l, kind] = row.trim().split(' ');
  const x = bar(i), ink = kind === 'r' ? '#f00' : '#000';
  let out = `<rect x="${x}" y="${h}" width="1" height="${l - h}" fill="${ink}"/>` +
    `<rect x="${x - 2}" y="${t}" width="5" height="${b - t}" fill="${ink}"/>`;
  if (kind === 'w') out += `<rect x="${x - 1}" y="${+t + 1}" width="3" height="${Math.max(1, b - t - 2)}" fill="#fff"/>`;
  return out;
}).join('');

// Range sizes and pivot names.
const ranges = [[40, 153, 64], [134, 153, 183], [230, 265, 163], [424, 490, 45], [520, 480, 61], [616, 480, 61], [808, 527, 50], [901, 552, 104],
  [1000, 688, 38], [1192, 635, 59], [1288, 582, 85], [1384, 574, 51], [1576, 589, 43], [1672, 611, 32], [1768, 614, 14]];
const days = [[286, 278, 'R1', '1.29872'], [289, 440, 'P', '1.29086'], [286, 727, 'S1', '1.27695'],
  [670, 359, 'R3', '1.29479'], [670, 419, 'R2', '1.29187'], [670, 484, 'R1', '1.28873'], [673, 544, 'P', '1.28581'], [670, 609, 'S1', '1.28267'], [670, 669, 'S2', '1.27975'], [670, 734, 'S3', '1.27661'],
  [1054, 331, 'R3', '1.29612'], [1054, 429, 'R2', '1.29139'], [1054, 570, 'R1', '1.28456'], [1057, 667, 'P', '1.27983'],
  [1438, 369, 'R3', '1.29431'], [1438, 471, 'R2', '1.28935'], [1438, 552, 'R1', '1.28541'], [1441, 655, 'P', '1.28045'], [1438, 736, 'S1', '1.27651']];
svg('notes').innerHTML =
  ranges.map(([x, y, n]) => `<text class="range" x="${x}" y="${y}">${n}</text>`).join('') +
  days.map(([x, y, n, v]) => `<text class="day" x="${x}" y="${y}">${n} Day: ${v}</text>`).join('');

// Stochastic: main line and its three-bar average.
const stoch = `807 823 821 806 800 787 793 815 834 848 847 842 838 832 817 808 811 828 836 843 848 848 842 843 844 847 843 844 847 844 828 808 797 808 820 832 832 830 828 815
796 784 785 791 798 807 804 795 791 793 799 805 815 815 807 797 788 783 807 821 818 801 797 799 808 810 826 825 823 812 812 803 792 796 807 820 825 830 830 825
807 796 795 807 807 809 811 810 797 787 792 795 799 808 831 841 841 841 844 847 843 836 825 808 797 796 824 832 828 824 835 846 848 848 849 847 839 834 834 833
820 811 798 794 801 815 829 823 817 817 819 810 790 780 785 785 798 810 837 831 823 797 795 795 801 801 813 828 831 812 793 792 797 810 822 828 840 844 844 830
810 796 789 791 804 815 810 789 785 785 787 793 815 843 846 837 823 806 806 818 837 847 844 839 839 835 838 838 817 817 815 819 813 808 807 811 818 833 849 843
837 827 819 805 800 790 797 803 817 819 808 802 805 823 841 831 816 804 820 836 838 831 811 800 792 797 796 813 827 841`.split(/\s+/).map(Number);
const average = stoch.map((v, i) => i < 2 ? (i ? 806 : 797) : Math.round((v + stoch[i - 1] + stoch[i - 2]) / 3));
const points = (list) => list.map((y, i) => `${bar(i)},${y}`).join(' ');
svg('stoch').innerHTML = `<polyline class="signal" points="${points(average)}"/><polyline class="main" points="${points(stoch)}"/>`;

// Price and time scales.
let labels = '', ticks = '';
for (let k = 0; k < 20; k++) {
  const y = 141 + 33 * k;
  ticks += `M1866 ${y}h3`;
  if (k !== 3) labels += `<text x="1872" y="${y + 3}">${(1.3048 - 0.0016 * k).toFixed(5)}</text>`;
}
for (const [y, text, fill] of [[240, '1.30000', '#00f'], [447, '1.29000', '#00f'], [618, '1.28170', '#000'], [653, '1.28000', '#00f']]) {
  labels += `<rect x="1868" y="${y - 5}" width="41" height="11" fill="${fill}"/><text class="tag" x="1872" y="${y + 3}">${text}</text>`;
}
const hours = ['00:30', '04:30', '08:30', '12:30', '16:30', '20:30'];
for (let k = 0; k < 29; k++) {
  const x = 14 + 64 * k, slot = k + 1;
  ticks += `M${x} 856v3`;
  labels += `<text x="${x - 1}" y="869">${25 + Math.floor(slot / 6)} Mar ${k ? hours[slot % 6] : '2013'}</text>`;
}
svg('labels').innerHTML = labels;
svg('ticks').setAttribute('d', ticks);
```
